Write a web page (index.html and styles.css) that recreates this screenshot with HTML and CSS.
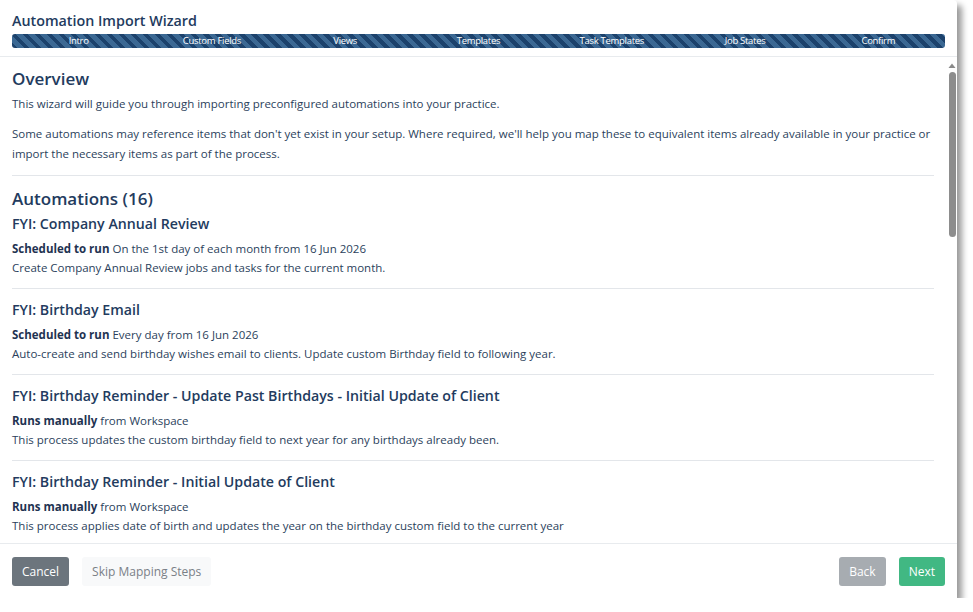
FILE: index.html
```html
<!DOCTYPE html>
<html lang="en">
<head>
    <meta charset="UTF-8">
    <title>Automation Import Wizard</title>
    <link rel="stylesheet" href="styles.css">
</head>
<body>
    <div class="wizard">
        <!-- Header with step bar -->
        <div class="wizard-header">
            <h1>Automation Import Wizard</h1>
            <div class="steps">
                <span>Intro</span>
                <span>Custom Fields</span>
                <span>Views</span>
                <span>Templates</span>
                <span>Task Templates</span>
                <span>Job States</span>
                <span>Confirm</span>
            </div>
        </div>

        <!-- Scrolling body -->
        <div class="wizard-main">
            <div class="wizard-body">
                <h2>Overview</h2>
                <p>This wizard will guide you through importing preconfigured automations into your practice.</p>
                <p>Some automations may reference items that don't yet exist in your setup. Where required, we'll help you map these to equivalent items already available in your practice or import the necessary items as part of the process.</p>
                <hr>
                <h2 class="section-title">Automations (16)</h2>

                <div class="automation first">
                    <h3>FYI: Company Annual Review</h3>
                    <div class="meta"><b>Scheduled to run</b> On the 1st day of each month from 16 Jun 2026</div>
                    <div class="desc">Create Company Annual Review jobs and tasks for the current month.</div>
                </div>
                <div class="automation">
                    <h3>FYI: Birthday Email</h3>
                    <div class="meta"><b>Scheduled to run</b> Every day from 16 Jun 2026</div>
                    <div class="desc">Auto-create and send birthday wishes email to clients. Update custom Birthday field to following year.</div>
                </div>
                <div class="automation">
                    <h3>FYI: Birthday Reminder - Update Past Birthdays - Initial Update of Client</h3>
                    <div class="meta"><b>Runs manually</b> from Workspace</div>
                    <div class="desc">This process updates the custom birthday field to next year for any birthdays already been.</div>
                </div>
                <div class="automation">
                    <h3>FYI: Birthday Reminder - Initial Update of Client</h3>
                    <div class="meta"><b>Runs manually</b> from Workspace</div>
                    <div class="desc">This process applies date of birth and updates the year on the birthday custom field to the current year</div>
                </div>
            </div>
            <!-- Scrollbar drawn by hand (headless hides native ones) -->
            <div class="scrollbar">
                <svg class="scroll-up" width="10" height="8" viewBox="0 0 10 8"><path d="M1.5 7 L5 2.5 L8.5 7 Z" fill="#8a8a8a"/></svg>
                <div class="scroll-thumb"></div>
            </div>
        </div>

        <!-- Footer buttons -->
        <div class="wizard-footer">
            <button class="btn btn-cancel">Cancel</button>
            <button class="btn btn-light">Skip Mapping Steps</button>
            <div class="spacer"></div>
            <button class="btn btn-back">Back</button>
            <button class="btn btn-next">Next</button>
        </div>
    </div>
</body>
</html>
```

FILE: styles.css
```css
body {
    margin: 0;
    padding: 0;
    background: #ffffff;
    font-family: 'Open Sans', 'Noto Sans', sans-serif;
    color: #2b3f5c;
}

.wizard {
    width: 957px;
    height: 598px;
    background: #ffffff;
    border-top-right-radius: 4px;
    box-shadow: 5px 5px 6px rgba(0, 0, 0, 0.4);
    display: flex;
    flex-direction: column;
}

/* Header */
.wizard-header {
    padding: 11px 12px 8px 12px;
    border-bottom: 1px solid #e8ebee;
}

.wizard-header h1 {
    margin: 0 0 4px 0;
    font-size: 14.3px;
    font-weight: 600;
    color: #233b5e;
    line-height: 19px;
}

.steps {
    display: grid;
    grid-template-columns: repeat(7, 1fr);
    height: 14px;
    border-radius: 3px;
    background-color: #22507e;
    background-image: repeating-linear-gradient(45deg, #1c426c 0, #1c426c 4px, #3b6893 4px, #3b6893 8.5px);
}

.steps span {
    text-align: center;
    color: #ffffff;
    font-size: 9.5px;
    line-height: 14px;
    letter-spacing: -0.3px;
}

/* Body */
.wizard-main {
    flex: 1;
    display: flex;
    min-height: 0;
}

.wizard-body {
    flex: 1;
    overflow: hidden;
    padding: 9px 13px 0 12px;
}

.scrollbar {
    width: 10px;
    display: flex;
    flex-direction: column;
    align-items: center;
    padding-top: 4px;
}

.scroll-up {
    display: block;
}

.scroll-thumb {
    margin-top: 3px;
    width: 7px;
    height: 165px;
    border-radius: 4px;
    background: #8d8d8d;
}

.wizard-body h2 {
    margin: 0 0 2px 0;
    font-size: 17px;
    font-weight: 600;
    line-height: 26px;
    color: #233b5e;
}

.wizard-body p {
    margin: 0 0 10px 0;
    font-size: 11.5px;
    line-height: 20px;
}

.wizard-body hr {
    border: 0;
    border-top: 1px solid #e3e6ea;
    margin: 11px 0 10px 0;
}

.wizard-body h2.section-title {
    margin-bottom: 0;
}

.automation {
    border-top: 1px solid #e3e6ea;
    padding: 9px 0 11px 0;
}

.automation.first {
    border-top: none;
    padding-top: 0;
}

.automation h3 {
    margin: 0 0 3px 0;
    font-size: 14.2px;
    font-weight: 600;
    line-height: 24px;
    color: #233b5e;
}

.meta, .desc {
    font-size: 11.5px;
    line-height: 19px;
}

.meta b {
    font-weight: 700;
    color: #1f3352;
}

/* Footer */
.wizard-footer {
    display: flex;
    align-items: center;
    gap: 13px;
    padding: 13px 12px 12px 12px;
    border-top: 1px solid #e8ebee;
}

.spacer {
    flex: 1;
}

.btn {
    height: 29px;
    padding: 0 10px;
    border: none;
    border-radius: 3px;
    font-family: 'Open Sans', 'Noto Sans', sans-serif;
    font-size: 12px;
    cursor: pointer;
}

.btn-cancel {
    background: #6c757d;
    color: #ffffff;
}

.btn-light {
    background: #f8f9fa;
    color: #7a8087;
}

.btn-back {
    background: #a7acb1;
    color: #ffffff;
}

.btn-next {
    background: #41b883;
    color: #ffffff;
}
```
